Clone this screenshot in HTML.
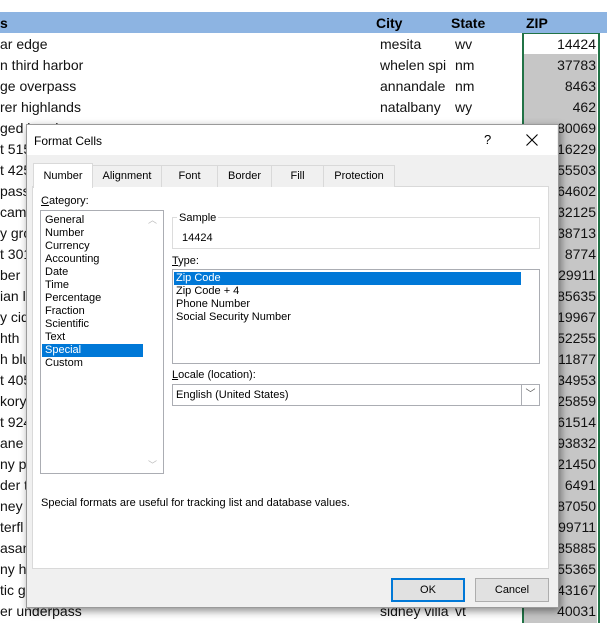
<!DOCTYPE html>
<html><head><style>
body{margin:0;width:607px;height:623px;overflow:hidden;background:#fff;font-family:"Liberation Sans",sans-serif;position:relative}
.a{position:absolute;white-space:nowrap}
.hdr{position:absolute;left:0;top:12px;width:607px;height:21px;background:#8db4e2;font-weight:bold;font-size:14px}
.r{position:absolute;left:0;width:607px;height:21px;font-size:14px;line-height:22px;color:#111}
.d{font-size:11px;color:#000}
.tab{position:absolute;top:165px;height:21px;border:1px solid #d9d9d9;border-bottom:none;background:#f0f0f0;font-size:11px;line-height:21px;text-align:center}
.box{position:absolute;background:#fff;border:1px solid #abadb3}
</style></head><body>
<div class="hdr"><span class="a" style="left:0;top:3px">s</span><span class="a" style="left:376px;top:3px">City</span><span class="a" style="left:451px;top:3px">State</span><span class="a" style="left:526px;top:3px">ZIP</span></div>
<div class="a" style="left:523px;top:54px;width:74px;height:569px;background:#c6c6c6"></div>
<div class="a" style="left:522px;top:33px;width:74px;height:590px;border:1px solid #217346;border-width:0 2px 0 2px"></div>
<div class="a" style="left:522px;top:33px;width:78px;height:1px;background:#217346"></div>
<div id="rows"></div>
<script>
var z=[14424,37783,8463,462,80069,16229,55503,64602,32125,38713,8774,29911,85635,19967,52255,11877,34953,25859,61514,93832,21450,6491,87050,99711,85885,55365,43167,40031];
var l=["ar edge","n third harbor","ge overpass","rer highlands","ged bend","t 515","t 425","pass","cam","y gro","t 301","ber","ian l","y cid","hth","h blu","t 405","kory","t 924","ane","ny p","der t","ney a","terfl","asan","ny h","tic g","er underpass"];
var c=[["mesita","wv"],["whelen spi","nm"],["annandale","nm"],["natalbany","wy"]];
var h="";
for(var i=0;i<28;i++){var y=33+i*21;h+='<div class="r" style="top:'+y+'px"><span class="a" style="left:0">'+l[i]+'</span>';
if(c[i])h+='<span class="a" style="left:380px">'+c[i][0]+'</span><span class="a" style="left:455px">'+c[i][1]+'</span>';
if(i==27)h+='<span class="a" style="left:380px">sidney villa</span><span class="a" style="left:455px">vt</span>';
h+='<span class="a" style="right:11px">'+z[i]+'</span></div>';}
document.getElementById("rows").innerHTML=h;
</script>
<div class="a" style="left:26px;top:124px;width:531px;height:482px;background:#f0f0f0;border:1px solid #9a9a9a;box-shadow:2px 3px 8px rgba(0,0,0,.45)">
</div>
<div class="a" style="left:27px;top:125px;width:530px;height:30px;background:#fff"></div>
<div class="a d" style="left:34px;top:134px;font-size:12px">Format Cells</div>
<div class="a" style="left:484px;top:132px;font-size:13px">?</div>
<svg class="a" style="left:526px;top:134px" width="12" height="12"><path d="M0.5 0.5L11.5 11.5M11.5 0.5L0.5 11.5" stroke="#000" stroke-width="1.1"/></svg>
<div class="a" style="left:32px;top:186px;width:515px;height:381px;background:#fff;border:1px solid #d9d9d9"></div>
<div class="tab" style="left:33px;top:163px;width:58px;height:24px;background:#fff;line-height:24px">Number</div>
<div class="tab" style="left:92px;width:68px">Alignment</div>
<div class="tab" style="left:161px;width:55px">Font</div>
<div class="tab" style="left:217px;width:53px">Border</div>
<div class="tab" style="left:271px;width:51px">Fill</div>
<div class="tab" style="left:323px;width:70px">Protection</div>
<div class="a d" style="left:41px;top:195px"><u>C</u>ategory:</div>
<div class="box" style="left:40px;top:210px;width:122px;height:262px"></div>
<div class="a d" style="left:45px;top:214px;line-height:13px">General<br>Number<br>Currency<br>Accounting<br>Date<br>Time<br>Percentage<br>Fraction<br>Scientific<br>Text<br><span style="display:inline-block;width:98px;background:#0078d7;color:#fff;margin-left:-3px;padding-left:3px">Special</span><br>Custom</div>
<div class="a" style="left:148px;top:213px;font-size:9px;color:#bbb">︿</div>
<div class="a" style="left:148px;top:458px;font-size:9px;color:#bbb">﹀</div>
<div class="a" style="left:172px;top:217px;width:366px;height:30px;border:1px solid #dcdcdc"></div>
<div class="a d" style="left:177px;top:212px;background:#fff;padding:0 2px">Sample</div>
<div class="a d" style="left:182px;top:232px">14424</div>
<div class="a d" style="left:172px;top:255px"><u>T</u>ype:</div>
<div class="box" style="left:172px;top:269px;width:366px;height:93px"></div>
<div class="a" style="left:174px;top:272px;width:347px;height:13px;background:#0078d7"></div>
<div class="a d" style="left:176px;top:272px;line-height:13px"><span style="color:#fff">Zip Code</span><br>Zip Code + 4<br>Phone Number<br>Social Security Number</div>
<div class="a d" style="left:172px;top:369px"><u>L</u>ocale (location):</div>
<div class="box" style="left:172px;top:384px;width:366px;height:20px"></div>
<div class="a" style="left:521px;top:385px;width:17px;height:20px;border-left:1px solid #abadb3;font-size:10px;color:#555;text-align:center;line-height:20px">﹀</div>
<div class="a d" style="left:176px;top:389px">English (United States)</div>
<div class="a d" style="left:41px;top:497px">Special formats are useful for tracking list and database values.</div>
<div class="a d" style="left:391px;top:578px;width:70px;height:20px;border:2px solid #0078d7;background:#e1e1e1;text-align:center;line-height:20px">OK</div>
<div class="a d" style="left:475px;top:578px;width:72px;height:22px;border:1px solid #adadad;background:#e1e1e1;text-align:center;line-height:22px">Cancel</div>
</body></html>
